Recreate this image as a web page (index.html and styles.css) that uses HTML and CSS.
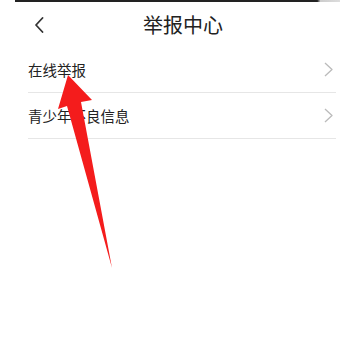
FILE: index.html
```html
<!DOCTYPE html>
<html lang="zh-CN">
<head>
    <meta charset="UTF-8">
    <meta name="viewport" content="width=device-width, initial-scale=1.0">
    <title>举报中心</title>
    <link rel="stylesheet" href="styles.css">
</head>
<body>
    <div class="page">
        <div class="top-line"></div>

        <div class="header">
            <svg class="back" width="10" height="16" viewBox="0 0 10 16">
                <path d="M8.5 1 L2 8 L8.5 15" fill="none" stroke="#333" stroke-width="1.8" stroke-linecap="round" stroke-linejoin="round"/>
            </svg>
            <h1>举报中心</h1>
        </div>

        <ul class="menu">
            <li class="menu-item">
                <span>在线举报</span>
                <svg class="arrow" width="9" height="15" viewBox="0 0 9 15">
                    <path d="M1 1 L8 7.5 L1 14" fill="none" stroke="#bbb" stroke-width="1.3" stroke-linejoin="round"/>
                </svg>
            </li>
            <li class="menu-item">
                <span>青少年不良信息</span>
                <svg class="arrow" width="9" height="15" viewBox="0 0 9 15">
                    <path d="M1 1 L8 7.5 L1 14" fill="none" stroke="#bbb" stroke-width="1.3" stroke-linejoin="round"/>
                </svg>
            </li>
        </ul>

        <!-- 标注箭头 -->
        <svg class="pointer" width="352" height="359" viewBox="0 0 352 359">
            <polygon points="68,75 92,100 81,102 112,268 67,106 58,109" fill="#f41c1c"/>
        </svg>
    </div>
</body>
</html>
```

FILE: styles.css
```css
body {
    margin: 0;
    background: #fff;
    font-family: 'Noto Sans CJK SC', 'Noto Sans', sans-serif;
    color: #222;
}

.page {
    position: relative;
    width: 352px;
    height: 359px;
    overflow: hidden;
}

.top-line {
    height: 2px;
    margin: 0 12px 0 15px;
    background: linear-gradient(to right, #222 0%, #222 93%, #ccc 94%, #ddd 100%);
}

.header {
    display: flex;
    align-items: center;
    height: 45px;
    padding: 0 30px 0 34px;
}

.back {
    flex: none;
}

h1 {
    flex: 1;
    margin: 0;
    text-align: center;
    font-size: 20px;
    font-weight: 400;
    color: #222;
}

.menu {
    list-style: none;
    margin: 0 16px 0 28px;
    padding: 0;
}

.menu-item {
    display: flex;
    align-items: center;
    justify-content: space-between;
    height: 45px;
    border-bottom: 1px solid #e6e6e6;
    font-size: 14.5px;
    padding-right: 3px;
}

.pointer {
    position: absolute;
    left: 0;
    top: 0;
}
```
